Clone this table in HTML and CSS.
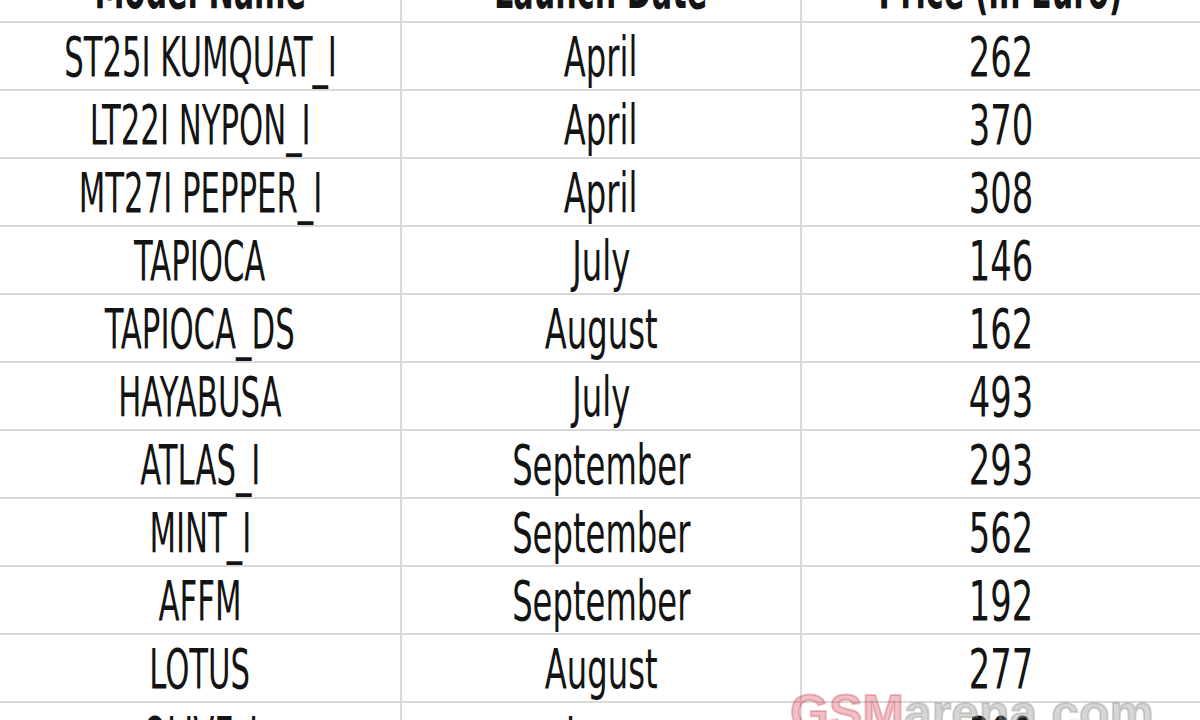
FILE: index.html
```html
<!DOCTYPE html>
<html lang="en">
<head>
<meta charset="utf-8">
<title>Model prices</title>
<link rel="stylesheet" href="styles.css">
</head>
<body>
<div class="sheet">
  <div class="row head">
    <div class="cell c1"><span class="t">Model Name</span></div>
    <div class="cell c2"><span class="t">Launch Date</span></div>
    <div class="cell c3"><span class="t">Price (in Euro)</span></div>
  </div>
  <div class="row"><div class="cell c1"><span class="t">ST25I KUMQUAT_I</span></div><div class="cell c2"><span class="t">April</span></div><div class="cell c3"><span class="t">262</span></div></div>
  <div class="row"><div class="cell c1"><span class="t">LT22I NYPON_I</span></div><div class="cell c2"><span class="t">April</span></div><div class="cell c3"><span class="t">370</span></div></div>
  <div class="row"><div class="cell c1"><span class="t">MT27I PEPPER_I</span></div><div class="cell c2"><span class="t">April</span></div><div class="cell c3"><span class="t">308</span></div></div>
  <div class="row"><div class="cell c1"><span class="t">TAPIOCA</span></div><div class="cell c2"><span class="t">July</span></div><div class="cell c3"><span class="t">146</span></div></div>
  <div class="row"><div class="cell c1"><span class="t">TAPIOCA_DS</span></div><div class="cell c2"><span class="t">August</span></div><div class="cell c3"><span class="t">162</span></div></div>
  <div class="row"><div class="cell c1"><span class="t">HAYABUSA</span></div><div class="cell c2"><span class="t">July</span></div><div class="cell c3"><span class="t">493</span></div></div>
  <div class="row"><div class="cell c1"><span class="t">ATLAS_I</span></div><div class="cell c2"><span class="t">September</span></div><div class="cell c3"><span class="t">293</span></div></div>
  <div class="row"><div class="cell c1"><span class="t">MINT_I</span></div><div class="cell c2"><span class="t">September</span></div><div class="cell c3"><span class="t">562</span></div></div>
  <div class="row"><div class="cell c1"><span class="t">AFFM</span></div><div class="cell c2"><span class="t">September</span></div><div class="cell c3"><span class="t">192</span></div></div>
  <div class="row"><div class="cell c1"><span class="t">LOTUS</span></div><div class="cell c2"><span class="t">August</span></div><div class="cell c3"><span class="t">277</span></div></div>
  <div class="row"><div class="cell c1"><span class="t">OLIVE_I</span></div><div class="cell c2"><span class="t">June</span></div><div class="cell c3"><span class="t">300</span></div></div>
</div>
<div class="watermark"><span class="wm-red">GSM</span><span class="wm-grey">arena.com</span></div>
</body>
</html>
```

FILE: styles.css
```css
html, body {
  margin: 0;
  padding: 0;
  width: 1200px;
  height: 720px;
  overflow: hidden;
  background: #ffffff;
}

body {
  position: relative;
  font-family: "DejaVu Sans Condensed", "Liberation Sans", sans-serif;
  color: #141414;
}

.sheet {
  margin-top: -45px;
  display: flex;
  flex-direction: column;
}

.row {
  display: grid;
  grid-template-columns: 402px 400px 398px;
}

.cell {
  height: 68px;
  box-sizing: border-box;
  border-bottom: 2px solid #d9d9d9;
  padding-top: 1px;
  line-height: 66px;
  font-size: 56px;
  display: flex;
  justify-content: center;
  align-items: flex-start;
  white-space: nowrap;
  overflow: visible;
}

.c1, .c2 {
  border-right: 2px solid #d9d9d9;
}

.t {
  display: block;
  flex: none;
}

.c1 .t {
  transform: scaleX(0.61);
}

.c2 .t {
  transform: scaleX(0.64);
}

.c3 .t {
  transform: scaleX(0.67);
}

.head .cell {
  font-weight: bold;
}

.head .c1 .t,
.head .c2 .t,
.head .c3 .t {
  transform: scaleX(0.6);
}

.watermark {
  position: absolute;
  left: 790px;
  top: 688px;
  font-family: "Liberation Sans", Arial, sans-serif;
  font-weight: bold;
  font-size: 50px;
  line-height: 50px;
  white-space: nowrap;
  -webkit-text-stroke: 2px currentColor;
}

.wm-red {
  color: rgba(205, 60, 75, 0.32);
}

.wm-grey {
  color: rgba(140, 140, 140, 0.36);
}
```
